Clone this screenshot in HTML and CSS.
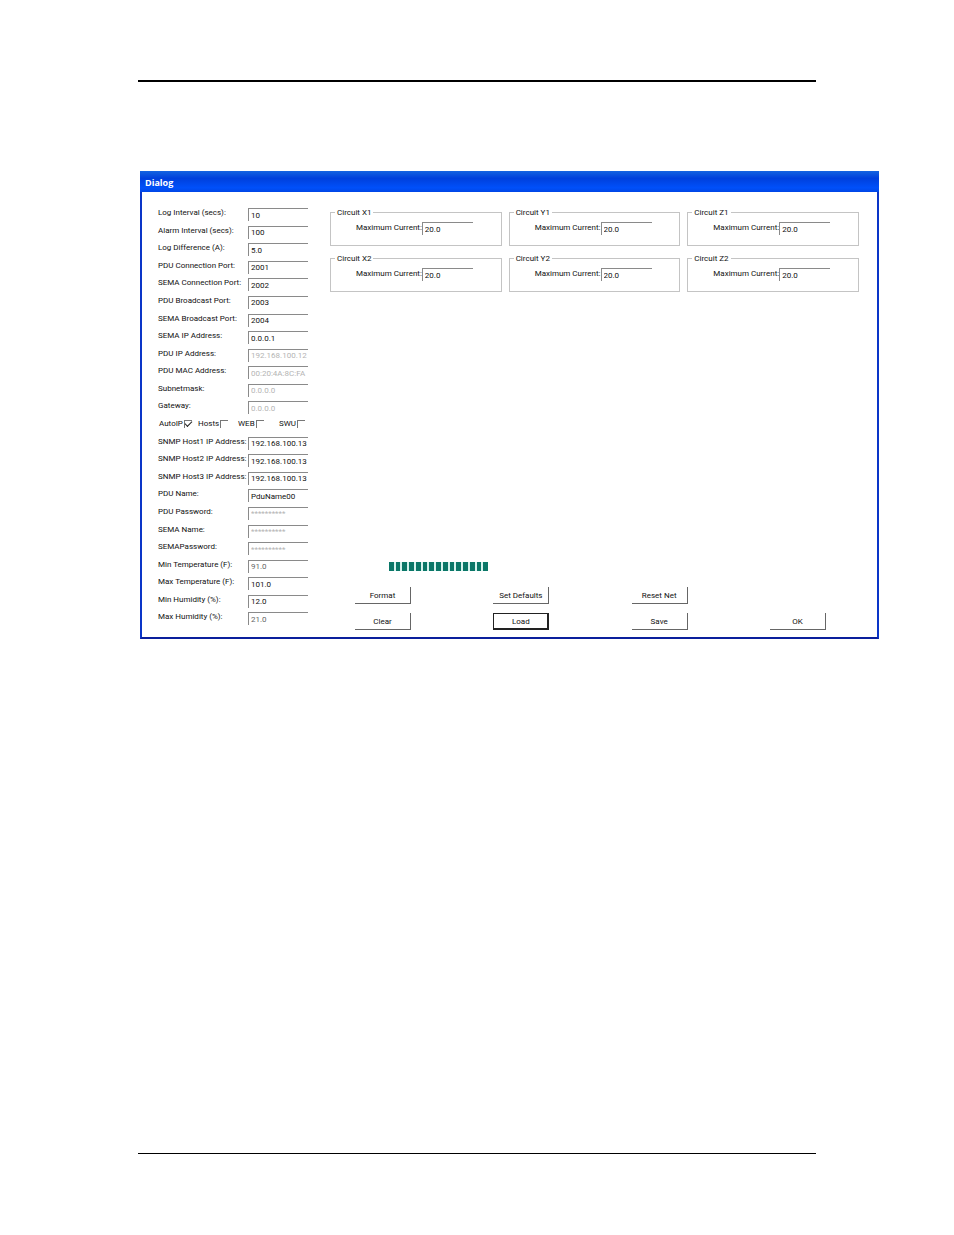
FILE: index.html
```
<!DOCTYPE html>
<html lang="en">
  <head>
    <meta charset="UTF-8" />
    <meta name="viewport" content="width=device-width, initial-scale=1.0" />
    <title>Dialog</title>
    <link rel="stylesheet" href="styles.css" />
  </head>
  <body>
    <hr class="rule rule_top" />
    <main class="dialog">
      <h1 class="titlebar">Dialog</h1>
      <form class="dialog_body" action="#">
        <div class="settings">
          <div class="row">
            <label for="log_interval">Log Interval (secs):</label>
            <input type="text" id="log_interval" value="10" />
          </div>
          <div class="row">
            <label for="alarm_interval">Alarm Interval (secs):</label>
            <input type="text" id="alarm_interval" value="100" />
          </div>
          <div class="row">
            <label for="log_difference">Log Difference (A):</label>
            <input type="text" id="log_difference" value="5.0" />
          </div>
          <div class="row">
            <label for="pdu_port">PDU Connection Port:</label>
            <input type="text" id="pdu_port" value="2001" />
          </div>
          <div class="row">
            <label for="sema_port">SEMA Connection Port:</label>
            <input type="text" id="sema_port" value="2002" />
          </div>
          <div class="row">
            <label for="pdu_broadcast">PDU Broadcast Port:</label>
            <input type="text" id="pdu_broadcast" value="2003" />
          </div>
          <div class="row">
            <label for="sema_broadcast">SEMA Broadcast Port:</label>
            <input type="text" id="sema_broadcast" value="2004" />
          </div>
          <div class="row">
            <label for="sema_ip">SEMA IP Address:</label>
            <input type="text" id="sema_ip" value="0.0.0.1" />
          </div>
          <div class="row">
            <label for="pdu_ip">PDU IP Address:</label>
            <input type="text" id="pdu_ip" value="192.168.100.12" disabled />
          </div>
          <div class="row">
            <label for="pdu_mac">PDU MAC Address:</label>
            <input type="text" id="pdu_mac" value="00:20:4A:8C:FA" disabled />
          </div>
          <div class="row">
            <label for="subnetmask">Subnetmask:</label>
            <input type="text" id="subnetmask" value="0.0.0.0" disabled />
          </div>
          <div class="row">
            <label for="gateway">Gateway:</label>
            <input type="text" id="gateway" value="0.0.0.0" disabled />
          </div>
          <div class="checks">
            <label>AutoIP<input type="checkbox" checked /></label>
            <label>Hosts<input type="checkbox" /></label>
            <label>WEB<input type="checkbox" /></label>
            <label>SWU<input type="checkbox" /></label>
          </div>
          <div class="row">
            <label for="host1">SNMP Host1 IP Address:</label>
            <input type="text" id="host1" value="192.168.100.13" />
          </div>
          <div class="row">
            <label for="host2">SNMP Host2 IP Address:</label>
            <input type="text" id="host2" value="192.168.100.13" />
          </div>
          <div class="row">
            <label for="host3">SNMP Host3 IP Address:</label>
            <input type="text" id="host3" value="192.168.100.13" />
          </div>
          <div class="row">
            <label for="pdu_name">PDU Name:</label>
            <input type="text" id="pdu_name" value="PduName00" />
          </div>
          <div class="row">
            <label for="pdu_password">PDU Password:</label>
            <input type="text" id="pdu_password" value="**********" disabled />
          </div>
          <div class="row">
            <label for="sema_name">SEMA Name:</label>
            <input type="text" id="sema_name" value="**********" disabled />
          </div>
          <div class="row">
            <label for="sema_password">SEMAPassword:</label>
            <input type="text" id="sema_password" value="**********" disabled />
          </div>
          <div class="row">
            <label for="min_temp">Min Temperature (F):</label>
            <input type="text" id="min_temp" class="soft" value="91.0" />
          </div>
          <div class="row">
            <label for="max_temp">Max Temperature (F):</label>
            <input type="text" id="max_temp" value="101.0" />
          </div>
          <div class="row">
            <label for="min_humidity">Min Humidity (%):</label>
            <input type="text" id="min_humidity" value="12.0" />
          </div>
          <div class="row">
            <label for="max_humidity">Max Humidity (%):</label>
            <input type="text" id="max_humidity" class="soft" value="21.0" />
          </div>
        </div>

        <div class="panel">
          <div class="circuits">
            <fieldset>
              <legend>Circuit X1</legend>
              <label for="x1">Maximum Current:</label>
              <input type="text" id="x1" value="20.0" />
            </fieldset>
            <fieldset>
              <legend>Circuit Y1</legend>
              <label for="y1">Maximum Current:</label>
              <input type="text" id="y1" value="20.0" />
            </fieldset>
            <fieldset>
              <legend>Circuit Z1</legend>
              <label for="z1">Maximum Current:</label>
              <input type="text" id="z1" value="20.0" />
            </fieldset>
            <fieldset>
              <legend>Circuit X2</legend>
              <label for="x2">Maximum Current:</label>
              <input type="text" id="x2" value="20.0" />
            </fieldset>
            <fieldset>
              <legend>Circuit Y2</legend>
              <label for="y2">Maximum Current:</label>
              <input type="text" id="y2" value="20.0" />
            </fieldset>
            <fieldset>
              <legend>Circuit Z2</legend>
              <label for="z2">Maximum Current:</label>
              <input type="text" id="z2" value="20.0" />
            </fieldset>
          </div>

          <div class="progress" role="progressbar" aria-label="Load progress">
            <span></span><span></span><span></span><span></span><span></span>
            <span></span><span></span><span></span><span></span><span></span>
            <span></span><span></span><span></span><span></span><span></span>
          </div>

          <div class="buttons">
            <button type="button">Format</button>
            <button type="button">Set Defaults</button>
            <button type="button">Reset Net</button>
            <button type="button" class="first_col">Clear</button>
            <button type="button" class="default">Load</button>
            <button type="button">Save</button>
            <button type="submit">OK</button>
          </div>
        </div>
      </form>
    </main>
    <hr class="rule rule_bottom" />
  </body>
</html>
```
FILE: styles.css
```
* {
  box-sizing: border-box;
  padding: 0;
  margin: 0;
}
body {
  min-height: 100vh;
  padding: 80px 0 81px;
  display: flex;
  flex-direction: column;
  background-color: #fff;
  color: #111;
  font-family: Roboto, "Liberation Sans", sans-serif;
  font-size: 8px;
  line-height: 13px;
}
input,
button {
  font: inherit;
  color: inherit;
}
.rule {
  border: none;
  background-color: #000;
  margin: 0 138px;
}
.rule_top {
  height: 2px;
}
.rule_bottom {
  height: 1px;
  margin-top: auto;
}
.dialog {
  margin: 89px 75px 40px 140px;
  border: 2px solid #0a35c8;
  border-top: none;
  border-bottom-color: #0a1f9c;
}
.titlebar {
  height: 21px;
  margin: 0 -2px;
  padding-left: 5px;
  background: linear-gradient(#1464e0, #0040dc 35%, #0050fa 80%, #0046e6);
  color: #fff;
  font-family: "Open Sans", sans-serif;
  font-size: 9px;
  font-weight: 700;
  line-height: 24px;
}
.dialog_body {
  display: flex;
  padding: 14px 18px 7px 16px;
}
.settings {
  width: 150px;
  min-height: 422px;
  margin: 0 22px 2px 0;
  flex-shrink: 0;
  display: grid;
  grid-template-columns: 100%;
  grid-auto-rows: 1fr;
}
.row {
  display: flex;
  justify-content: space-between;
  align-items: flex-start;
  white-space: nowrap;
}
input[type="text"] {
  width: 60px;
  height: 13px;
  margin-top: 2px;
  padding-left: 2px;
  border: none;
  border-top: 1px solid #8a8a8a;
  border-left: 1px solid #8a8a8a;
  border-radius: 0;
  background-color: #fff;
  flex-shrink: 0;
}
input[type="text"]:disabled {
  color: #b4b4b4;
}
input.soft {
  color: #666;
}
.checks {
  display: grid;
  grid-template-columns: 39px 40px 41px auto;
  align-items: start;
  padding-left: 1px;
}
.checks label {
  display: flex;
  align-items: center;
  gap: 1px;
}
input[type="checkbox"] {
  appearance: none;
  width: 8px;
  height: 8px;
  border-top: 1px solid #777;
  border-left: 1px solid #777;
}
input[type="checkbox"]:checked::before {
  content: "";
  display: block;
  width: 6px;
  height: 3px;
  border-left: 1px solid #222;
  border-bottom: 1px solid #222;
  transform: rotate(-45deg);
}
.panel {
  flex: 1;
  display: flex;
  flex-direction: column;
}
.circuits {
  display: grid;
  grid-template-columns: repeat(3, 1fr);
  column-gap: 7px;
  row-gap: 6px;
}
fieldset {
  min-width: 0;
  height: 40px;
  padding: 0 28px 0 25px;
  border: 1px solid #c4c4c4;
  display: flex;
  justify-content: space-between;
  align-items: flex-start;
  white-space: nowrap;
}
legend {
  margin-left: -21px;
  padding: 0 2px;
}
fieldset label {
  margin-top: 2px;
}
fieldset input[type="text"] {
  width: 51px;
  margin-top: 3px;
}
.progress {
  width: 99px;
  height: 9px;
  margin: auto 0 16px 59px;
  display: flex;
  gap: 2px;
  background-color: #d5f3ee;
}
.progress span {
  flex: 1;
  background-color: #0b7768;
}
.buttons {
  display: grid;
  grid-template-columns: repeat(4, 56px);
  justify-content: space-between;
  row-gap: 9px;
  margin: 0 33px 0 25px;
}
button {
  height: 17px;
  border: none;
  border-right: 1px solid #666;
  border-bottom: 1px solid #666;
  background-color: #fff;
  white-space: nowrap;
}
.first_col {
  grid-column: 1;
}
button.default {
  border: 1px solid #222;
  border-right-width: 2px;
  border-bottom-width: 2px;
}
```
